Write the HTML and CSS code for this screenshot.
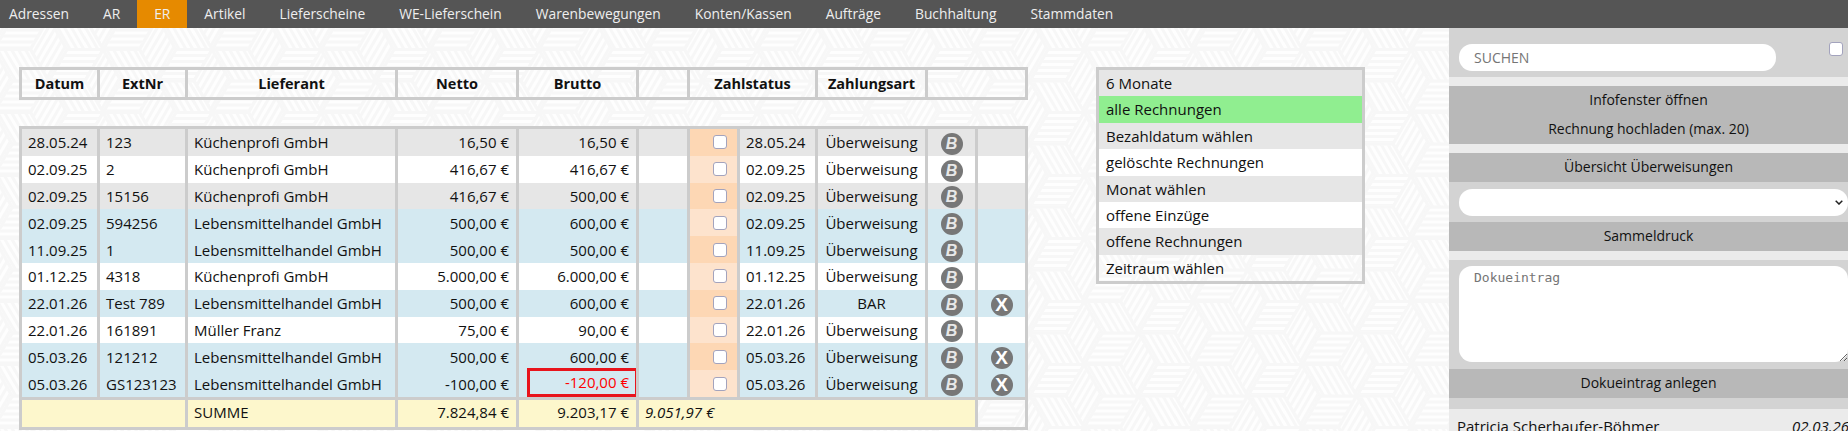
FILE: index.html
```html
<!DOCTYPE html>
<html>
<head>
    <meta charset="UTF-8">
    <title>ER</title>
    <link rel="stylesheet" href="styles.css">
</head>
<body>
  <div class="nav">
    <a>Adressen</a>
    <a>AR</a>
    <a class="active">ER</a>
    <a>Artikel</a>
    <a>Lieferscheine</a>
    <a>WE-Lieferschein</a>
    <a>Warenbewegungen</a>
    <a>Konten/Kassen</a>
    <a>Aufträge</a>
    <a>Buchhaltung</a>
    <a>Stammdaten</a>
  </div>
  <div class="page">
    <div class="main">
      <div class="tables">
        <table class="head">
          <colgroup><col class="c1"><col class="c2"><col class="c3"><col class="c4"><col class="c5"><col class="c6"><col class="c7"><col class="c8"><col class="c9"><col class="c10"><col class="c11"></colgroup>
          <tr>
            <th>Datum</th><th>ExtNr</th><th>Lieferant</th><th>Netto</th><th>Brutto</th><th></th>
            <th colspan="2">Zahlstatus</th><th>Zahlungsart</th><th colspan="2"></th>
          </tr>
        </table>
        <table class="rows">
          <colgroup><col class="c1"><col class="c2"><col class="c3"><col class="c4"><col class="c5"><col class="c6"><col class="c7"><col class="c8"><col class="c9"><col class="c10"><col class="c11"></colgroup>
          <tr class="grey">
            <td>28.05.24</td><td>123</td><td>Küchenprofi GmbH</td><td class="num">16,50 €</td><td class="num">16,50 €</td><td></td>
            <td class="check"><input type="checkbox"></td><td>28.05.24</td><td class="mid">Überweisung</td><td class="mid"><span class="bubble">B</span></td><td></td>
          </tr>
          <tr class="white">
            <td>02.09.25</td><td>2</td><td>Küchenprofi GmbH</td><td class="num">416,67 €</td><td class="num">416,67 €</td><td></td>
            <td class="check"><input type="checkbox"></td><td>02.09.25</td><td class="mid">Überweisung</td><td class="mid"><span class="bubble">B</span></td><td></td>
          </tr>
          <tr class="grey">
            <td>02.09.25</td><td>15156</td><td>Küchenprofi GmbH</td><td class="num">416,67 €</td><td class="num">500,00 €</td><td></td>
            <td class="check"><input type="checkbox"></td><td>02.09.25</td><td class="mid">Überweisung</td><td class="mid"><span class="bubble">B</span></td><td></td>
          </tr>
          <tr class="blue">
            <td>02.09.25</td><td>594256</td><td>Lebensmittelhandel GmbH</td><td class="num">500,00 €</td><td class="num">600,00 €</td><td></td>
            <td class="check"><input type="checkbox"></td><td>02.09.25</td><td class="mid">Überweisung</td><td class="mid"><span class="bubble">B</span></td><td></td>
          </tr>
          <tr class="blue">
            <td>11.09.25</td><td>1</td><td>Lebensmittelhandel GmbH</td><td class="num">500,00 €</td><td class="num">500,00 €</td><td></td>
            <td class="check"><input type="checkbox"></td><td>11.09.25</td><td class="mid">Überweisung</td><td class="mid"><span class="bubble">B</span></td><td></td>
          </tr>
          <tr class="white">
            <td>01.12.25</td><td>4318</td><td>Küchenprofi GmbH</td><td class="num">5.000,00 €</td><td class="num">6.000,00 €</td><td></td>
            <td class="check"><input type="checkbox"></td><td>01.12.25</td><td class="mid">Überweisung</td><td class="mid"><span class="bubble">B</span></td><td></td>
          </tr>
          <tr class="blue">
            <td>22.01.26</td><td>Test 789</td><td>Lebensmittelhandel GmbH</td><td class="num">500,00 €</td><td class="num">600,00 €</td><td></td>
            <td class="check"><input type="checkbox"></td><td>22.01.26</td><td class="mid">BAR</td><td class="mid"><span class="bubble">B</span></td><td class="mid"><span class="bubble del">X</span></td>
          </tr>
          <tr class="white">
            <td>22.01.26</td><td>161891</td><td>Müller Franz</td><td class="num">75,00 €</td><td class="num">90,00 €</td><td></td>
            <td class="check"><input type="checkbox"></td><td>22.01.26</td><td class="mid">Überweisung</td><td class="mid"><span class="bubble">B</span></td><td></td>
          </tr>
          <tr class="blue">
            <td>05.03.26</td><td>121212</td><td>Lebensmittelhandel GmbH</td><td class="num">500,00 €</td><td class="num">600,00 €</td><td></td>
            <td class="check"><input type="checkbox"></td><td>05.03.26</td><td class="mid">Überweisung</td><td class="mid"><span class="bubble">B</span></td><td class="mid"><span class="bubble del">X</span></td>
          </tr>
          <tr class="blue">
            <td>05.03.26</td><td>GS123123</td><td>Lebensmittelhandel GmbH</td><td class="num">-100,00 €</td><td class="num alert"><span>-120,00 €</span></td><td></td>
            <td class="check"><input type="checkbox"></td><td>05.03.26</td><td class="mid">Überweisung</td><td class="mid"><span class="bubble">B</span></td><td class="mid"><span class="bubble del">X</span></td>
          </tr>
          <tr class="sum">
            <td colspan="2"></td><td>SUMME</td><td class="num">7.824,84 €</td><td class="num">9.203,17 €</td>
            <td colspan="5"><i>9.051,97 €</i></td><td class="none"></td>
          </tr>
        </table>
      </div>
      <ul class="filter">
        <li>6 Monate</li>
        <li class="on">alle Rechnungen</li>
        <li>Bezahldatum wählen</li>
        <li>gelöschte Rechnungen</li>
        <li>Monat wählen</li>
        <li>offene Einzüge</li>
        <li>offene Rechnungen</li>
        <li>Zeitraum wählen</li>
      </ul>
    </div>
    <div class="side">
      <div class="box search">
        <input type="text" placeholder="SUCHEN">
        <input type="checkbox">
      </div>
      <div class="btns">
        <div class="btn">Infofenster öffnen</div>
        <div class="btn">Rechnung hochladen (max. 20)</div>
      </div>
      <div class="btns">
        <div class="btn">Übersicht Überweisungen</div>
        <div class="box pick"><select></select></div>
        <div class="btn">Sammeldruck</div>
      </div>
      <div class="btns">
        <div class="box note"><textarea placeholder="Dokueintrag"></textarea></div>
        <div class="btn">Dokueintrag anlegen</div>
        <div class="box end"></div>
      </div>
      <div class="entry">
        <span>Patricia Scherhaufer-Böhmer</span>
        <i>02.03.26</i>
      </div>
    </div>
  </div>
</body>
</html>
```
FILE: styles.css
```css
html, body {
    margin: 0;
    height: 100%;
    overflow: hidden;
}
body {
    font-family: "Open Sans", "Noto Sans", sans-serif;
    font-size: 14px;
    color: #111;
    background-color: #fff;
}
.nav {
    display: flex;
    height: 28px;
    background-color: #555;
}
.nav a {
    padding: 0 17px;
    line-height: 27px;
    font-size: 13.8px;
    color: #eee;
}
.nav a:first-child {
    padding-left: 9px;
}
.nav .active {
    background-color: #e68a00;
}
.page {
    display: flex;
    height: 403px;
}
/* hex tile: three striped rhombi around each lattice point */
.main {
    flex: 1;
    display: flex;
    align-items: flex-start;
    padding: 39px 0 0 19px;
    background-color: #f7f7f7;
    background-position: 85px 53px;
    background-size: 109px 63px;
    background-image: url("data:image/svg+xml,%3Csvg xmlns='http://www.w3.org/2000/svg' xmlns:xlink='http://www.w3.org/1999/xlink' width='109' height='63'%3E%3Cdefs%3E%3Cpattern id='a' width='6' height='6' patternUnits='userSpaceOnUse'%3E%3Crect width='6' height='3' fill='%23fefefe'/%3E%3C/pattern%3E%3Cpattern id='b' width='6' height='6' patternUnits='userSpaceOnUse' patternTransform='rotate(-60)'%3E%3Crect width='6' height='3' fill='%23fefefe'/%3E%3C/pattern%3E%3Cpattern id='c' width='6' height='6' patternUnits='userSpaceOnUse' patternTransform='rotate(60)'%3E%3Crect width='6' height='3' fill='%23fefefe'/%3E%3C/pattern%3E%3Cg id='h' stroke='%23f7f7f7' stroke-width='3'%3E%3Cpath fill='url(%23a)' d='M0 0H-36.3L-18.2 -31.5H18.2Z'/%3E%3Cpath fill='url(%23b)' d='M0 0L18.2 -31.5L36.3 0L18.2 31.5Z'/%3E%3Cpath fill='url(%23c)' d='M0 0L18.2 31.5H-18.2L-36.3 0Z'/%3E%3C/g%3E%3C/defs%3E%3Cuse xlink:href='%23h'/%3E%3Cuse xlink:href='%23h' x='109'/%3E%3Cuse xlink:href='%23h' y='63'/%3E%3Cuse xlink:href='%23h' x='109' y='63'/%3E%3Cuse xlink:href='%23h' x='54.5' y='31.5'/%3E%3C/svg%3E");
}
.tables {
    width: 1009px;
}
table {
    width: 1009px;
    table-layout: fixed;
    border-collapse: collapse;
    font-size: 15px;
}
.c1 { width: 78px; }
.c2 { width: 88px; }
.c3 { width: 210px; }
.c4 { width: 121px; }
.c5 { width: 120px; }
.c6 { width: 51px; }
.c7 { width: 50px; }
.c8 { width: 78px; }
.c9 { width: 110px; }
.c10 { width: 50px; }
.c11 { width: 50px; }
th {
    height: 27px;
    padding: 0;
    border: 3px solid #ccc;
    font-size: 14.5px;
    font-weight: bold;
}
.head {
    margin-bottom: 26px;
}
td {
    height: 26.8px;
    padding: 0 7px 0 6px;
    border-left: 3px solid #ccc;
    border-right: 3px solid #ccc;
    line-height: 24px;
    white-space: nowrap;
}
.rows {
    border: 3px solid #ccc;
}
.grey td { background-color: #e6e6e6; }
.white td { background-color: #fff; }
.blue td { background-color: #d4e9f1; }
.sum td {
    height: 27px;
    padding-bottom: 3px;
    box-sizing: border-box;
    background-color: #fdf7cc;
    border-top: 3px solid #ccc;
    border-bottom: 3px solid #ccc;
}
.sum .none {
    background-color: transparent;
}
.num {
    text-align: right;
}
.mid {
    padding: 0;
    text-align: center;
}
tr:nth-child(odd) .check {
    background-color: #fdd7b4;
}
tr:nth-child(even) .check {
    background-color: #fde3cd;
}
.check {
    padding-right: 10px;
}
input[type="checkbox"] {
    appearance: none;
    display: block;
    width: 14px;
    height: 14px;
    margin: 0 0 0 auto;
    background-color: #fff;
    border: 1px solid #a3a3bd;
    border-radius: 3px;
    box-sizing: border-box;
}
.bubble {
    display: inline-block;
    width: 22px;
    height: 22px;
    border-radius: 50%;
    background-color: #777;
    color: #e8e8e8;
    font-family: "Liberation Sans", sans-serif;
    font-style: italic;
    font-weight: bold;
    font-size: 16px;
    line-height: 22px;
    text-align: center;
    vertical-align: middle;
}
.del {
    color: #fff;
    font-style: normal;
    font-size: 19px;
}
td.alert {
    padding: 0;
    color: #f00;
}
.alert span {
    display: block;
    height: 29px;
    margin: -3px -2px -1px 8px;
    padding-right: 6px;
    border: 3px solid #e8141c;
    box-sizing: border-box;
    line-height: 22px;
}
.filter {
    width: 269px;
    margin: 0 0 0 68px;
    padding: 0;
    list-style: none;
    border: 3px solid #ccc;
    box-sizing: border-box;
    font-size: 15px;
}
.filter li {
    height: 26.4px;
    line-height: 26px;
    padding-left: 7px;
}
.filter li:nth-child(odd) { background-color: #e6e6e6; }
.filter li:nth-child(4), .filter li:nth-child(6) { background-color: #fff; }
.filter li:last-child { background-color: transparent; }
.filter .on { background-color: #90ee90; }
.side {
    flex: none;
    width: 399px;
    background-color: #ebebeb;
    overflow: hidden;
}
.box {
    background-color: #d3d3d3;
}
.search {
    display: flex;
    align-items: flex-start;
    height: 49px;
    padding: 14px 5px 0 10px;
    box-sizing: border-box;
}
.search input[type="text"] {
    width: 317px;
    height: 27px;
    margin-top: 2px;
    padding: 0 15px;
    border: 0;
    border-radius: 13px;
    box-sizing: border-box;
    font-family: inherit;
    font-size: 14px;
}
.btns {
    margin-top: 9px;
}
.btn {
    height: 29px;
    line-height: 28px;
    text-align: center;
    background-color: #b8b8b8;
}
.pick {
    height: 40px;
    padding: 7px 0 0 10px;
    box-sizing: border-box;
}
.pick select {
    appearance: none;
    display: block;
    width: 389px;
    height: 27px;
    border: 0;
    border-radius: 13px;
    background-color: #fff;
    background-repeat: no-repeat;
    background-position: right 5px center;
    background-image: url("data:image/svg+xml,%3Csvg xmlns='http://www.w3.org/2000/svg' width='8' height='5'%3E%3Cpath d='M.7.7L4 4L7.3.7' fill='none' stroke='%23222' stroke-width='1.5'/%3E%3C/svg%3E");
}
.note {
    height: 109px;
    padding: 6px 0 0 10px;
    box-sizing: border-box;
}
.note textarea {
    display: block;
    width: 389px;
    height: 96px;
    padding: 4px 15px;
    border: 0;
    border-radius: 13px;
    box-sizing: border-box;
    font-family: "DejaVu Sans Mono", monospace;
    font-size: 13px;
}
.end {
    height: 11px;
}
.entry {
    display: flex;
    justify-content: space-between;
    width: 400px;
    padding: 7px 0 0 8px;
    box-sizing: border-box;
    font-size: 15px;
}
.entry span, .entry i {
    white-space: nowrap;
}
```
